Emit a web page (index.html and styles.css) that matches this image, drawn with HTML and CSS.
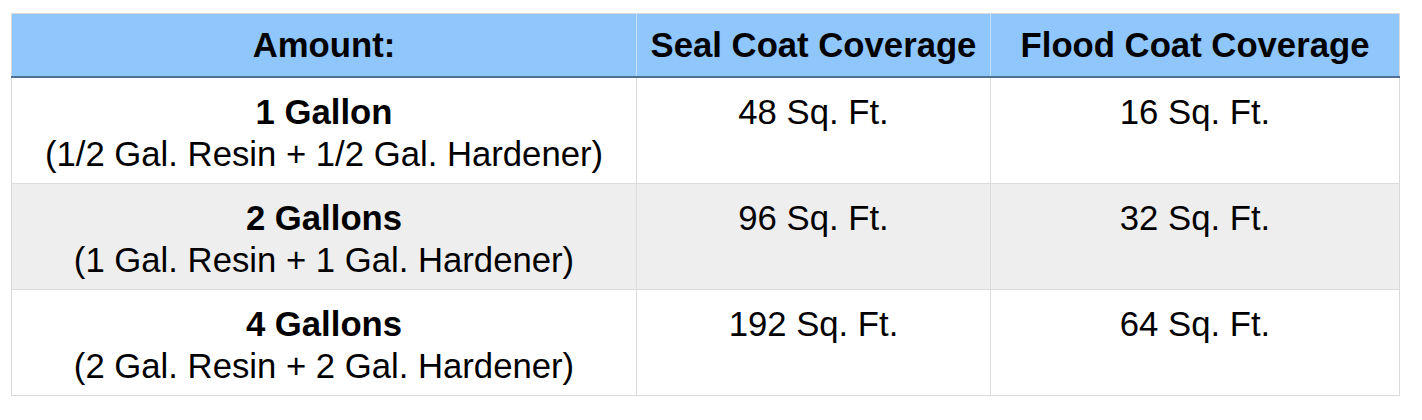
FILE: index.html
```html
<!DOCTYPE html>
<html>
<head>
<meta charset="utf-8">
<link rel="stylesheet" href="styles.css">
</head>
<body>
<div class="wrap">
<table class="cov">
  <colgroup>
    <col class="c1">
    <col class="c2">
    <col class="c3">
  </colgroup>
  <thead>
    <tr>
      <th>Amount:</th>
      <th>Seal Coat Coverage</th>
      <th>Flood Coat Coverage</th>
    </tr>
  </thead>
  <tbody>
    <tr>
      <td><span class="amt">1 Gallon</span><br>(1/2 Gal. Resin + 1/2 Gal. Hardener)</td>
      <td>48 Sq. Ft.</td>
      <td>16 Sq. Ft.</td>
    </tr>
    <tr class="alt">
      <td><span class="amt">2 Gallons</span><br>(1 Gal. Resin + 1 Gal. Hardener)</td>
      <td>96 Sq. Ft.</td>
      <td>32 Sq. Ft.</td>
    </tr>
    <tr>
      <td><span class="amt">4 Gallons</span><br>(2 Gal. Resin + 2 Gal. Hardener)</td>
      <td>192 Sq. Ft.</td>
      <td>64 Sq. Ft.</td>
    </tr>
  </tbody>
</table>
</div>
</body>
</html>
```
FILE: styles.css
```css
html, body {
  margin: 0;
  padding: 0;
  background: #ffffff;
}
.wrap {
  padding: 13px 0 0 11px;
}
.cov {
  border-collapse: collapse;
  width: 1388px;
  table-layout: fixed;
  font-family: "Liberation Sans", Arial, sans-serif;
  font-size: 34.7px;
  color: #000;
  border: 1px solid #d9d9d9;
}
.c1 { width: 625px; }
.c2 { width: 354px; }
.c3 { width: 409px; }
.cov th {
  background: #8fc6fc;
  font-weight: bold;
  line-height: 40px;
  padding: 11px 0 11px 0;
  border-bottom: 2px solid #4e6e94;
  border-left: 1px solid #c6e0fb;
  text-align: center;
  vertical-align: top;
}
.cov th:first-child { border-left: none; }
.cov td {
  line-height: 42px;
  padding: 13px 0 8px 0;
  text-align: center;
  vertical-align: top;
  border-top: 1px solid #dcdcdc;
  border-left: 1px solid #dcdcdc;
}
.cov td:first-child { border-left: none; }
.cov tbody tr:first-child td { border-top: none; }
.cov tr.alt td { background: #eeeeee; }
.amt { font-weight: bold; }
```
